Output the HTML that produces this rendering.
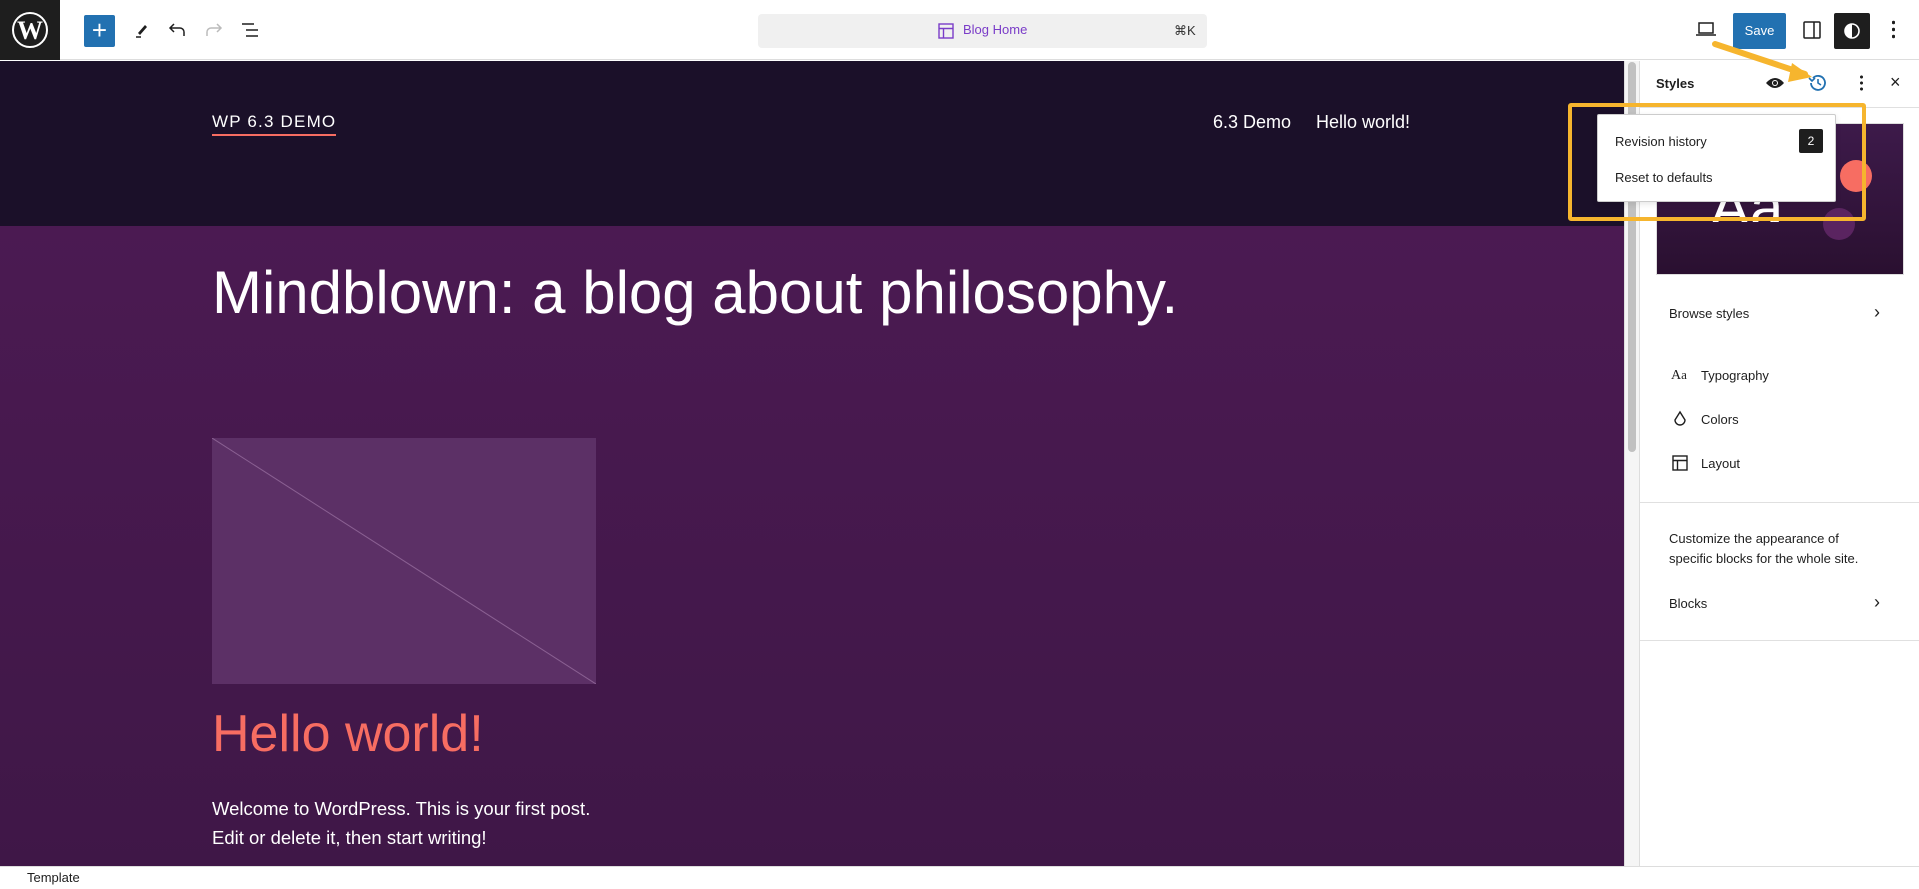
<!DOCTYPE html>
<html><head><meta charset="utf-8"><style>
*{margin:0;padding:0;box-sizing:border-box}
body{width:1919px;height:889px;overflow:hidden;background:#fff;font-family:"Liberation Sans",sans-serif;position:relative;color:#1e1e1e}
.a{position:absolute}
.t{font-size:13px;color:#1e1e1e}
</style></head><body>
<!-- top bar -->
<div class="a" style="left:0;top:0;width:1919px;height:60px;background:#fff;border-bottom:1px solid #ddd"></div>
<div class="a" style="left:0;top:0;width:60px;height:60px;background:#1e1e1e"></div>
<svg class="a" style="left:10px;top:10px" width="40" height="40" viewBox="0 0 40 40"><circle cx="20" cy="20" r="17" fill="none" stroke="#fff" stroke-width="2"/><text x="20" y="29" text-anchor="middle" font-family="Liberation Serif" font-size="26" font-weight="bold" fill="#fff">W</text></svg>
<div class="a" style="left:84px;top:15px;width:31px;height:32px;background:#2271b1;border-radius:2px;color:#fff;font-size:26px;line-height:30px;text-align:center">+</div>
<svg class="a" style="left:132px;top:20px" width="20" height="20" viewBox="0 0 20 20"><path d="M6 13l7-8 2 2-7 8z" fill="#1e1e1e"/><path d="M4 17h5" stroke="#1e1e1e" stroke-width="1.5"/></svg>
<svg class="a" style="left:166px;top:20px" width="22" height="20" viewBox="0 0 22 20"><path d="M5 8h9a4 4 0 0 1 4 4v4M8 4L4 8l4 4" fill="none" stroke="#1e1e1e" stroke-width="1.5"/></svg>
<svg class="a" style="left:203px;top:20px" width="22" height="20" viewBox="0 0 22 20"><path d="M17 8H8a4 4 0 0 0-4 4v4M14 4l4 4-4 4" fill="none" stroke="#bbb" stroke-width="1.5"/></svg>
<svg class="a" style="left:240px;top:21px" width="22" height="18" viewBox="0 0 22 18"><path d="M2 3h12M6 9h12M6 15h12" stroke="#1e1e1e" stroke-width="1.5"/></svg>
<div class="a" style="left:758px;top:14px;width:449px;height:34px;background:#f0f0f0;border-radius:4px"></div>
<svg class="a" style="left:938px;top:23px" width="16" height="16" viewBox="0 0 16 16"><rect x="1" y="1" width="14" height="14" fill="none" stroke="#7a3cc8" stroke-width="1.4"/><path d="M1 5.5h14M5.5 5.5v9.5" stroke="#7a3cc8" stroke-width="1.4"/></svg>
<div class="a" style="left:963px;top:22px;font-size:13px;color:#7a3cc8">Blog Home</div>
<div class="a" style="left:1174px;top:23px;font-size:13px;color:#333">⌘K</div>
<svg class="a" style="left:1695px;top:20px" width="22" height="18" viewBox="0 0 22 18"><rect x="4" y="3" width="14" height="10" fill="none" stroke="#1e1e1e" stroke-width="1.5"/><path d="M1 15h20" stroke="#1e1e1e" stroke-width="1.5"/></svg>
<div class="a" style="left:1733px;top:13px;width:53px;height:36px;background:#2271b1;border-radius:2px;color:#fff;font-size:13px;line-height:36px;text-align:center">Save</div>
<svg class="a" style="left:1802px;top:20px" width="20" height="20" viewBox="0 0 20 20"><rect x="2" y="2" width="16" height="16" rx="1" fill="none" stroke="#1e1e1e" stroke-width="1.5"/><path d="M12 2v16" stroke="#1e1e1e" stroke-width="1.5"/></svg>
<div class="a" style="left:1834px;top:13px;width:36px;height:36px;background:#1e1e1e;border-radius:2px"></div>
<svg class="a" style="left:1842px;top:21px" width="20" height="20" viewBox="0 0 20 20"><circle cx="10" cy="10" r="7" fill="none" stroke="#fff" stroke-width="1.6"/><path d="M10 3a7 7 0 0 0 0 14z" fill="#fff"/></svg>
<div class="a" style="left:1892px;top:19px;width:3px;height:22px;background:radial-gradient(circle,#1e1e1e 1.5px,transparent 2px) 0 0/3px 7px"></div>
<!-- canvas -->
<div class="a" style="left:0;top:61px;width:1624px;height:165px;background:#1b1029"></div>
<div class="a" style="left:0;top:226px;width:1624px;height:640px;background:linear-gradient(#4b1a52,#3f1747)"></div>
<div class="a" style="left:212px;top:112px;font-size:17px;color:#fff;letter-spacing:1.2px;border-bottom:2px solid #f76d62;padding-bottom:2px">WP 6.3 DEMO</div>
<div class="a" style="left:1213px;top:112px;font-size:18px;color:#fff">6.3 Demo</div>
<div class="a" style="left:1316px;top:112px;font-size:18px;color:#fff">Hello world!</div>
<div class="a" style="left:212px;top:258px;font-size:60px;color:#fff">Mindblown: a blog about philosophy.</div>
<svg class="a" style="left:212px;top:438px" width="384" height="246"><rect width="384" height="246" fill="#5c3066"/><line x1="0" y1="0" x2="384" y2="246" stroke="#8a6092" stroke-width="1"/></svg>
<div class="a" style="left:212px;top:704px;font-size:52px;color:#f76d62">Hello world!</div>
<div class="a" style="left:212px;top:794px;font-size:18.5px;color:#fff;line-height:29px">Welcome to WordPress. This is your first post.<br>Edit or delete it, then start writing!</div>
<!-- scrollbar -->
<div class="a" style="left:1624px;top:61px;width:16px;height:805px;background:#f5f5f5;border-left:1px solid #ddd;border-right:1px solid #ddd"></div>
<div class="a" style="left:1628px;top:62px;width:8px;height:390px;background:#c1c1c1;border-radius:4px"></div>
<!-- bottom bar -->
<div class="a" style="left:0;top:866px;width:1919px;height:23px;background:#fff;border-top:1px solid #ddd"></div>
<div class="a" style="left:27px;top:870px;font-size:13px">Template</div>
<!-- sidebar -->
<div class="a" style="left:1640px;top:61px;width:279px;height:805px;background:#fff"></div>
<div class="a" style="left:1656px;top:76px;font-size:13px;font-weight:bold">Styles</div>
<svg class="a" style="left:1765px;top:76px" width="20" height="14" viewBox="0 0 20 14"><path d="M1 7Q10-3 19 7Q10 17 1 7z" fill="#1e1e1e"/><circle cx="10" cy="7" r="3" fill="#fff"/><circle cx="10" cy="7" r="2" fill="#1e1e1e"/></svg>
<svg class="a" style="left:1807px;top:72px" width="22" height="22" viewBox="0 0 22 22"><path d="M4 11a7 7 0 1 0 2-5" fill="none" stroke="#2271b1" stroke-width="1.8"/><path d="M2 6l3 3 3-3" fill="none" stroke="#2271b1" stroke-width="1.6"/><path d="M11 7v4l3 2" fill="none" stroke="#2271b1" stroke-width="1.6"/></svg>
<div class="a" style="left:1860px;top:74px;width:3px;height:18px;background:radial-gradient(circle,#1e1e1e 1.3px,transparent 1.8px) 0 0/3px 6px"></div>
<div class="a" style="left:1890px;top:72px;font-size:18px">×</div>
<div class="a" style="left:1640px;top:107px;width:279px;height:1px;background:#e0e0e0"></div>
<div class="a" style="left:1656px;top:123px;width:248px;height:152px;background:linear-gradient(#3d1a4a,#2a1030);border:1px solid #ddd"></div>
<div class="a" style="left:1840px;top:160px;width:32px;height:32px;border-radius:50%;background:#f76d62"></div>
<div class="a" style="left:1823px;top:208px;width:32px;height:32px;border-radius:50%;background:#5a2460"></div>
<div class="a" style="left:1710px;top:178px;font-size:60px;color:#fff;line-height:60px;height:44px;overflow:hidden">Aa</div>
<!-- popover -->
<div class="a" style="left:1597px;top:114px;width:239px;height:88px;background:#fff;border:1px solid #ccc;border-radius:2px;box-shadow:0 2px 6px rgba(0,0,0,.1)"></div>
<div class="a t" style="left:1615px;top:134px">Revision history</div>
<div class="a" style="left:1799px;top:129px;width:24px;height:24px;background:#1e1e1e;color:#fff;font-size:12px;line-height:24px;text-align:center;border-radius:2px">2</div>
<div class="a t" style="left:1615px;top:170px">Reset to defaults</div>
<div class="a" style="left:1568px;top:103px;width:298px;height:118px;border:4px solid #f6b52e;border-radius:3px"></div>
<svg class="a" style="left:1710px;top:38px" width="110" height="50"><path d="M5 6L95 36" stroke="#f6b52e" stroke-width="6" stroke-linecap="round"/><path d="M82 25L102 39L78 44z" fill="#f6b52e"/></svg>
<div class="a t" style="left:1669px;top:306px">Browse styles</div>
<div class="a" style="left:1874px;top:302px;font-size:18px">›</div>
<div class="a" style="left:1671px;top:367px;font-size:14px;font-family:'Liberation Serif'">A<span style="font-size:13px">a</span></div>
<div class="a t" style="left:1701px;top:368px">Typography</div>
<svg class="a" style="left:1672px;top:410px" width="16" height="18" viewBox="0 0 16 18"><path d="M8 2L3 10a5 5 0 1 0 10 0z" fill="none" stroke="#1e1e1e" stroke-width="1.4"/></svg>
<div class="a t" style="left:1701px;top:412px">Colors</div>
<svg class="a" style="left:1672px;top:455px" width="16" height="16" viewBox="0 0 16 16"><rect x="1" y="1" width="14" height="14" fill="none" stroke="#1e1e1e" stroke-width="1.4"/><path d="M1 5.5h14M5.5 5.5v9.5" stroke="#1e1e1e" stroke-width="1.4"/></svg>
<div class="a t" style="left:1701px;top:456px">Layout</div>
<div class="a" style="left:1640px;top:502px;width:279px;height:1px;background:#e0e0e0"></div>
<div class="a t" style="left:1669px;top:529px;line-height:20px">Customize the appearance of<br>specific blocks for the whole site.</div>
<div class="a t" style="left:1669px;top:596px">Blocks</div>
<div class="a" style="left:1874px;top:592px;font-size:18px">›</div>
<div class="a" style="left:1640px;top:640px;width:279px;height:1px;background:#e0e0e0"></div>
</body></html>
